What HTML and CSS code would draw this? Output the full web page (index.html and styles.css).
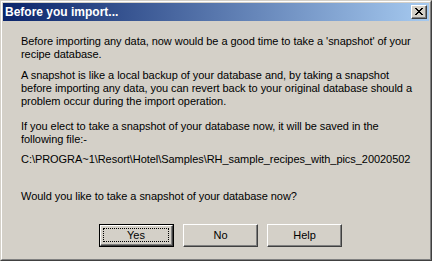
FILE: index.html
```html
<!DOCTYPE html>
<html>
<head>
<meta charset="utf-8">
<link rel="stylesheet" href="styles.css">
</head>
<body>
<div class="window">
  <div class="frame">
    <div class="titlebar">
      <span class="title">Before you import...</span>
      <div class="close">
        <svg width="8" height="7" viewBox="0 0 8 7" shape-rendering="crispEdges">
          <path d="M0 0h2v1h-2zM6 0h2v1h-2zM1 1h2v1h-2zM5 1h2v1h-2zM2 2h4v1h-4zM3 3h2v1h-2zM2 4h4v1h-4zM1 5h2v1h-2zM5 5h2v1h-2zM0 6h2v1h-2zM6 6h2v1h-2z" fill="#000"/>
        </svg>
      </div>
    </div>
    <div class="content">
      <p class="p1">Before importing any data, now would be a good time to take a 'snapshot' of your<br>recipe database.</p>
      <p class="p2">A snapshot is like a local backup of your database and, by taking a snapshot<br>before importing any data, you can revert back to your original database should a<br>problem occur during the import operation.</p>
      <p class="p3">If you elect to take a snapshot of your database now, it will be saved in the<br>following file:-</p>
      <p class="path">C:\PROGRA~1\Resort\Hotel\Samples\RH_sample_recipes_with_pics_20020502</p>
      <p class="question">Would you like to take a snapshot of your database now?</p>
      <div class="buttons">
        <div class="btn default"><div class="btn-inner"><span class="focus">Yes</span></div></div>
        <div class="btn"><div class="btn-inner"><span class="lbl">No</span></div></div>
        <div class="btn"><div class="btn-inner"><span class="lbl">Help</span></div></div>
      </div>
    </div>
  </div>
</div>
</body>
</html>
```

FILE: styles.css
```css
* { box-sizing: border-box; }
html, body {
  margin: 0;
  padding: 0;
  background: #d4d0c8;
}
.window {
  width: 432px;
  height: 261px;
  border: 1px solid;
  border-color: #d4d0c8 #404040 #404040 #d4d0c8;
  background: #d4d0c8;
}
.frame {
  width: 100%;
  height: 100%;
  border: 1px solid;
  border-color: #ffffff #808080 #808080 #ffffff;
  padding: 1px;
  display: flex;
  flex-direction: column;
}
.titlebar {
  height: 18px;
  background: linear-gradient(to right, #0a246a, #a6caf0);
  display: flex;
  align-items: center;
  justify-content: space-between;
  padding: 0 2px 0 2px;
}
.title {
  color: #ffffff;
  font-family: "Liberation Sans", Arial, sans-serif;
  font-weight: bold;
  font-size: 12px;
  line-height: 18px;
}
.close {
  width: 16px;
  height: 14px;
  background: #d4d0c8;
  border: 1px solid;
  border-color: #ffffff #404040 #404040 #ffffff;
  box-shadow: inset -1px -1px 0 #808080;
  display: flex;
  align-items: center;
  justify-content: center;
  padding-right: 1px;
  padding-bottom: 1px;
}
.close svg { display: block; }
.content {
  padding: 14px 0 0 18px;
  font-family: "Liberation Sans", Arial, sans-serif;
  font-size: 11px;
  line-height: 13px;
  letter-spacing: -0.05px;
  color: #000;
}
.content p { margin: 0; white-space: nowrap; }
.p2 { margin-top: 8px !important; }
.p3 { margin-top: 12px !important; }
.path { margin-top: 7px !important; }
.question { margin-top: 24px !important; }
.buttons {
  display: flex;
  gap: 9px;
  margin-top: 21px;
  padding-left: 78px;
}
.btn {
  width: 75px;
  height: 23px;
  border: 1px solid;
  border-color: #ffffff #404040 #404040 #ffffff;
  box-shadow: inset -1px -1px 0 #808080;
  display: flex;
  align-items: stretch;
}
.btn-inner {
  flex: 1;
  display: flex;
  align-items: center;
  justify-content: center;
}
.btn.default {
  border: 1px solid #000;
  box-shadow: none;
}
.btn.default .btn-inner {
  border: 1px solid;
  border-color: #ffffff #404040 #404040 #ffffff;
  box-shadow: inset -1px -1px 0 #808080;
  padding: 2px 3px 3px 2px;
}
.focus {
  flex: 1;
  align-self: stretch;
  border: 1px dotted #000;
  display: flex;
  align-items: center;
  justify-content: center;
}
.lbl { padding-bottom: 1px; }
```
